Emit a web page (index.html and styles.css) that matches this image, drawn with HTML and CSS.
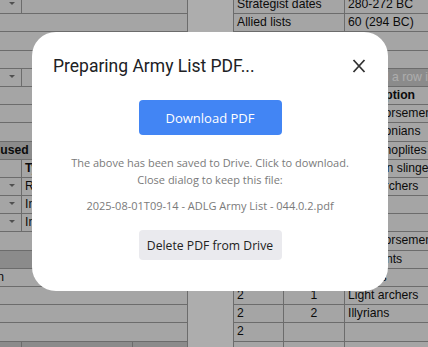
FILE: index.html
```html
<!DOCTYPE html>
<html lang="en">
<head>
    <meta charset="UTF-8">
    <meta name="viewport" content="width=device-width, initial-scale=1.0">
    <title>Army List</title>
    <link rel="stylesheet" href="styles.css">
</head>
<body>
    <div class="sheet">
        <div class="table table-left">
            <div class="row"><div class="cell col-pick"><span class="caret"></span></div><div class="cell"></div></div>
            <div class="row"><div class="cell"></div></div>
            <div class="row"><div class="cell"></div></div>
            <div class="row"><div class="cell"></div></div>
            <div class="row"><div class="cell col-pick"><span class="caret"></span></div><div class="cell"></div></div>
            <div class="row"><div class="cell"></div></div>
            <div class="row"><div class="cell"></div></div>
            <div class="row"><div class="cell"></div></div>
            <div class="row band"><div class="cell cut-unused bold">Unused</div></div>
            <div class="row"><div class="cell col-pick"></div><div class="cell bold">Type</div></div>
            <div class="row"><div class="cell col-pick"><span class="caret"></span></div><div class="cell">Regular</div></div>
            <div class="row"><div class="cell col-pick"><span class="caret"></span></div><div class="cell">Infantry</div></div>
            <div class="row"><div class="cell col-pick"><span class="caret"></span></div><div class="cell">Infantry</div></div>
            <div class="row"><div class="cell"></div></div>
            <div class="row band"><div class="cell"></div></div>
            <div class="row"><div class="cell cut-option">Option</div></div>
            <div class="row"><div class="cell"></div></div>
            <div class="row"><div class="cell"></div></div>
            <div class="row"><div class="cell"></div></div>
            <div class="row band"><div class="cell col-pick"></div><div class="cell col-mid"></div><div class="cell"></div></div>
        </div>

        <div class="table table-right">
            <div class="row"><div class="cell col-label">Strategist dates</div><div class="cell">280-272 BC</div></div>
            <div class="row"><div class="cell col-label">Allied lists</div><div class="cell">60 (294 BC)</div></div>
            <div class="row"><div class="cell col-label"></div><div class="cell"></div></div>
            <div class="row"><div class="cell col-label"></div><div class="cell"></div></div>
            <div class="row band"><div class="cell add-row">Click to add a row in the list</div></div>
            <div class="row"><div class="cell col-min"></div><div class="cell col-max"></div><div class="cell bold">Description</div></div>
            <div class="row"><div class="cell col-min"></div><div class="cell col-max"></div><div class="cell">Light horsemen</div></div>
            <div class="row"><div class="cell col-min"></div><div class="cell col-max"></div><div class="cell">Macedonians</div></div>
            <div class="row"><div class="cell col-min"></div><div class="cell col-max"></div><div class="cell">Greek hoplites</div></div>
            <div class="row"><div class="cell col-min"></div><div class="cell col-max"></div><div class="cell">Rhodian slingers</div></div>
            <div class="row"><div class="cell col-min"></div><div class="cell col-max"></div><div class="cell">Light archers</div></div>
            <div class="row"><div class="cell col-min"></div><div class="cell col-max"></div><div class="cell"></div></div>
            <div class="row"><div class="cell col-min"></div><div class="cell col-max"></div><div class="cell"></div></div>
            <div class="row"><div class="cell col-min"></div><div class="cell col-max"></div><div class="cell">Light horsemen</div></div>
            <div class="row"><div class="cell col-min"></div><div class="cell col-max"></div><div class="cell">Elephants</div></div>
            <div class="row"><div class="cell col-min"></div><div class="cell col-max"></div><div class="cell">Italians</div></div>
            <div class="row"><div class="cell col-min">2</div><div class="cell col-max">1</div><div class="cell">Light archers</div></div>
            <div class="row"><div class="cell col-min">2</div><div class="cell col-max">2</div><div class="cell">Illyrians</div></div>
            <div class="row"><div class="cell col-min">2</div><div class="cell col-max"></div><div class="cell"></div></div>
            <div class="row"><div class="cell col-min"></div><div class="cell col-max"></div><div class="cell"></div></div>
        </div>
    </div>

    <div class="overlay">
        <div class="dialog">
            <div class="dialog-head">
                <h2 class="dialog-title">Preparing Army List PDF...</h2>
                <button class="close" title="Close">
                    <svg width="14" height="14" viewBox="0 0 14 14"><path d="M1.5 1 L12.5 13 M12.5 1 L1.5 13" stroke="#333" stroke-width="1.8" fill="none"/></svg>
                </button>
            </div>
            <div class="dialog-body">
                <button class="btn-primary">Download PDF</button>
                <p class="note">The above has been saved to Drive. Click to download.<br>Close dialog to keep this file:</p>
                <p class="file">2025-08-01T09-14 - ADLG Army List - 044.0.2.pdf</p>
                <button class="btn-secondary">Delete PDF from Drive</button>
            </div>
        </div>
    </div>
</body>
</html>
```

FILE: styles.css
```css
body {
    margin: 0;
    height: 347px;
    overflow: hidden;
    background: #fff;
    color: #111;
    font-family: "Liberation Sans", Arial, sans-serif;
    font-size: 12.2px;
}

.sheet {
    display: flex;
    align-items: flex-start;
    margin-top: -4px;
}

.table {
    display: flex;
    flex-direction: column;
}

.table-left {
    flex: none;
    width: 188px;
    box-sizing: border-box;
    border-right: 1px solid #a0a0a0;
}

.table-right {
    flex: 1;
    min-width: 0;
    margin-left: 45px;
    border-left: 1px solid #a0a0a0;
}

.row {
    display: flex;
    height: 18.2px;
    box-sizing: border-box;
    border-bottom: 1px solid #a0a0a0;
    background: #f4f4f4;
}

.row.band {
    background: #cdcdcd;
}

.cell {
    flex: 1;
    min-width: 0;
    padding: 0 3px;
    line-height: 17px;
    white-space: nowrap;
    overflow: hidden;
}

.cell + .cell {
    border-left: 1px solid #a0a0a0;
}

.bold {
    font-weight: bold;
}

.col-pick {
    flex: 0 0 21px;
    box-sizing: border-box;
    padding: 0 0 0 9px;
}

.col-mid {
    flex: 0 0 111px;
    box-sizing: border-box;
}

.col-label {
    flex: 0 0 110px;
    box-sizing: border-box;
}

.col-min {
    flex: 0 0 49px;
    box-sizing: border-box;
}

.col-max {
    flex: 0 0 61px;
    box-sizing: border-box;
    text-align: center;
}

.caret {
    display: inline-block;
    vertical-align: middle;
    margin-top: -3px;
    border-left: 3px solid transparent;
    border-right: 3px solid transparent;
    border-top: 3px solid #777;
}

.cut-unused {
    padding: 0;
    text-indent: -16px;
}

.cut-option {
    padding: 0;
    text-indent: -32px;
}

.add-row {
    padding-left: 91px;
    color: #fff;
}

/* dialog */

.overlay {
    position: fixed;
    inset: 0;
    background: rgba(0, 0, 0, 0.32);
    display: flex;
    align-items: flex-start;
    padding: 32px 0 0 32px;
}

.dialog {
    width: 356px;
    box-sizing: border-box;
    padding: 21px 0 31px;
    background: #fff;
    border-radius: 24px;
    font-family: "Open Sans", sans-serif;
}

.dialog-head {
    display: flex;
    align-items: center;
    justify-content: space-between;
    height: 26px;
    padding: 0 22px 0 21px;
}

.dialog-title {
    margin: 0;
    font-family: Roboto, sans-serif;
    font-weight: 400;
    font-size: 17.5px;
    line-height: 26px;
    color: #202124;
}

.close {
    display: flex;
    width: 14px;
    height: 14px;
    padding: 0;
    border: none;
    background: none;
    cursor: pointer;
}

.dialog-body {
    display: flex;
    flex-direction: column;
    align-items: center;
    margin-top: 21px;
}

.btn-primary {
    width: 143px;
    height: 35px;
    border: none;
    border-radius: 4px;
    background: #4285f4;
    color: #fff;
    font-family: "Open Sans", sans-serif;
    font-size: 13px;
    cursor: pointer;
}

.note,
.file {
    margin: 19px 0 0;
    font-size: 11px;
    line-height: 17px;
    color: #7a7a7a;
    text-align: center;
}

.file {
    margin-top: 9px;
}

.btn-secondary {
    width: 143px;
    height: 30px;
    margin-top: 16px;
    border: none;
    border-radius: 4px;
    background: #eaeaee;
    color: #222;
    font-family: "Open Sans", sans-serif;
    font-size: 12.2px;
    cursor: pointer;
}
```
